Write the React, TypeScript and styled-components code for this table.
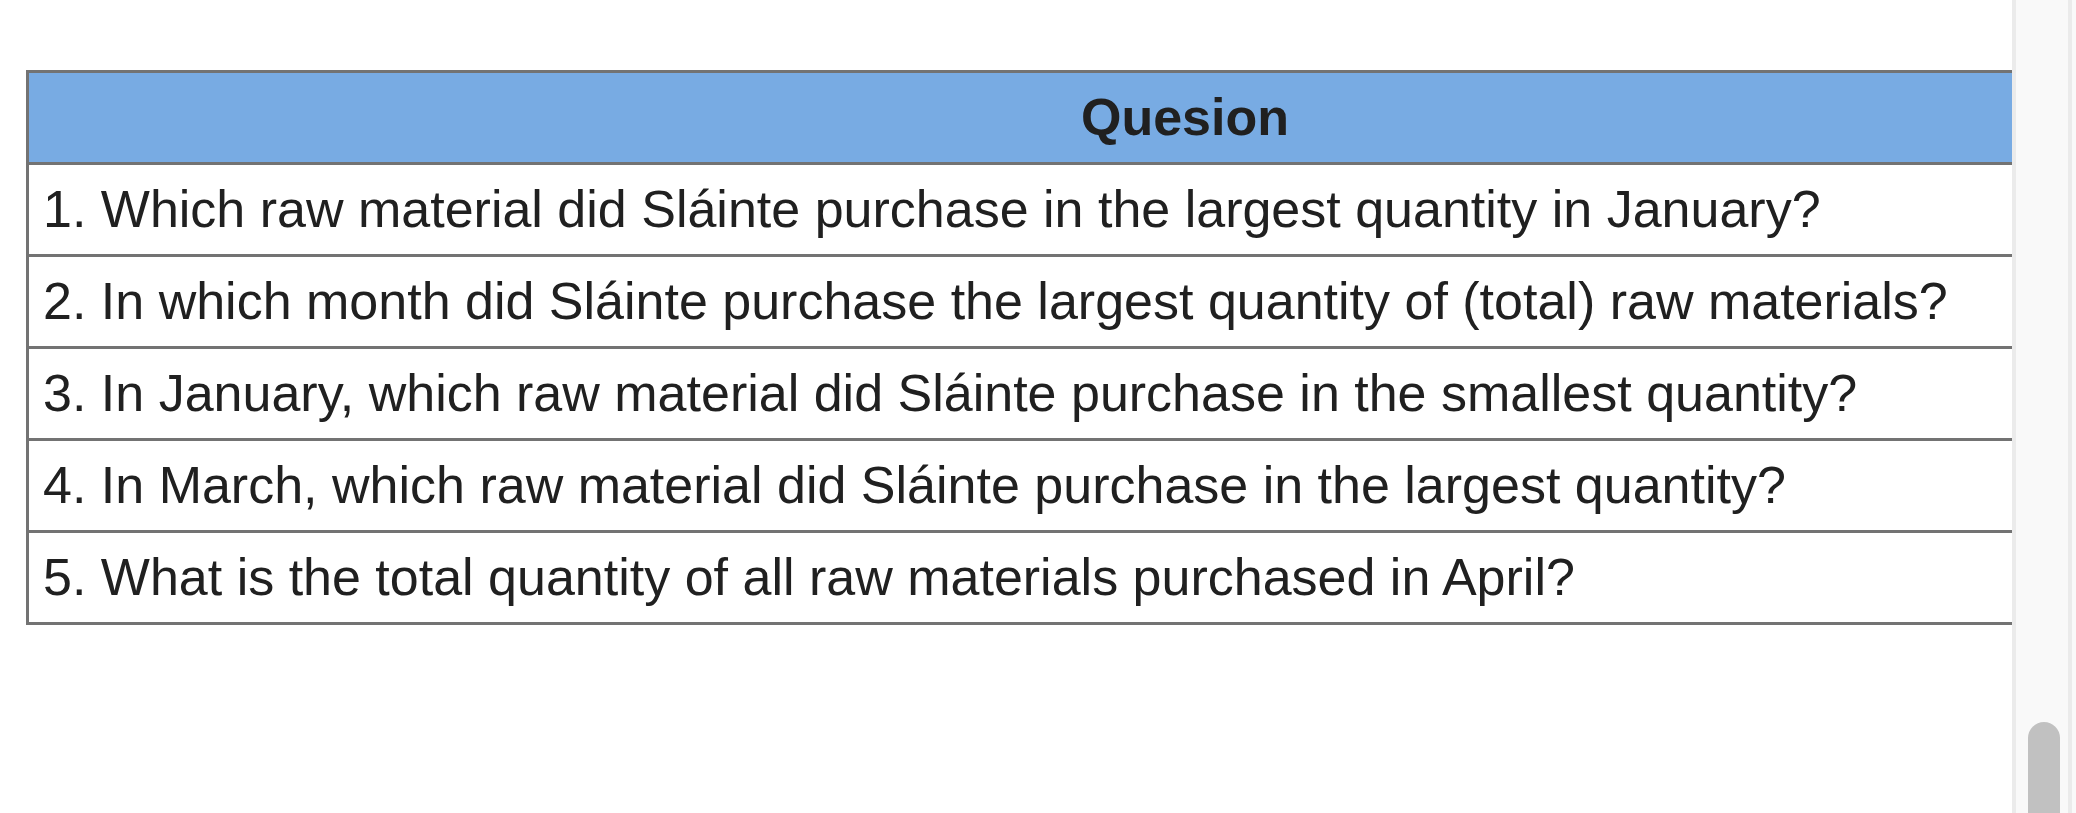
import React, { FC } from 'react';
import styled, { createGlobalStyle } from 'styled-components';

const questions: string[] = [
  '1. Which raw material did Sláinte purchase in the largest quantity in January?',
  '2. In which month did Sláinte purchase the largest quantity of (total) raw materials?',
  '3. In January, which raw material did Sláinte purchase in the smallest quantity?',
  '4. In March, which raw material did Sláinte purchase in the largest quantity?',
  '5. What is the total quantity of all raw materials purchased in April?',
];

const QuestionTable: FC = () => {
  return (
    <Table>
      <thead>
        <tr>
          <HeadCell>Quesion</HeadCell>
        </tr>
      </thead>
      <tbody>
        {questions.map((q) => (
          <tr key={q}>
            <Cell>{q}</Cell>
          </tr>
        ))}
      </tbody>
    </Table>
  );
};

const App: FC = () => {
  return (
    <>
      <GlobalStyle />
      <Page>
        <Content>
          <QuestionTable />
        </Content>
        <ScrollTrack>
          <ScrollThumb />
        </ScrollTrack>
      </Page>
    </>
  );
};

export default App;

const GlobalStyle = createGlobalStyle`
  html, body {
    margin: 0;
    padding: 0;
    overflow: hidden;
    background: #ffffff;
  }
`;

const Page = styled.div`
  display: flex;
  flex-direction: row;
  width: 2076px;
  height: 813px;
  overflow: hidden;
`;

const Content = styled.div`
  flex: 1;
  min-width: 0;
  overflow: hidden;
  padding: 70px 0 0 26px;
  background: #ffffff;
`;

const Table = styled.table`
  width: 2318px;
  border-collapse: collapse;
  font-family: 'Liberation Sans', Arial, sans-serif;
  font-size: 52px;
  color: #202020;
`;

const HeadCell = styled.th`
  padding: 14px 14px 15px;
  line-height: 60px;
  text-align: center;
  font-weight: bold;
  background: #78abe3;
  border: 3px solid #737373;
`;

const Cell = styled.td`
  padding: 14px 14px 15px;
  line-height: 60px;
  text-align: left;
  background: #ffffff;
  border: 3px solid #737373;
  white-space: nowrap;
`;

const ScrollTrack = styled.div`
  width: 64px;
  flex-shrink: 0;
  display: flex;
  flex-direction: column;
  justify-content: flex-end;
  padding: 0 16px 0 12px;
  box-sizing: border-box;
  border-left: 4px solid #ebebeb;
  background: #f9f9f9;
  box-shadow: inset -4px 0 0 #f9f9f9, inset -8px 0 0 #ebebeb;
`;

const ScrollThumb = styled.div`
  width: 32px;
  height: 91px;
  border-radius: 16px 16px 0 0;
  background: #c1c1c1;
`;
